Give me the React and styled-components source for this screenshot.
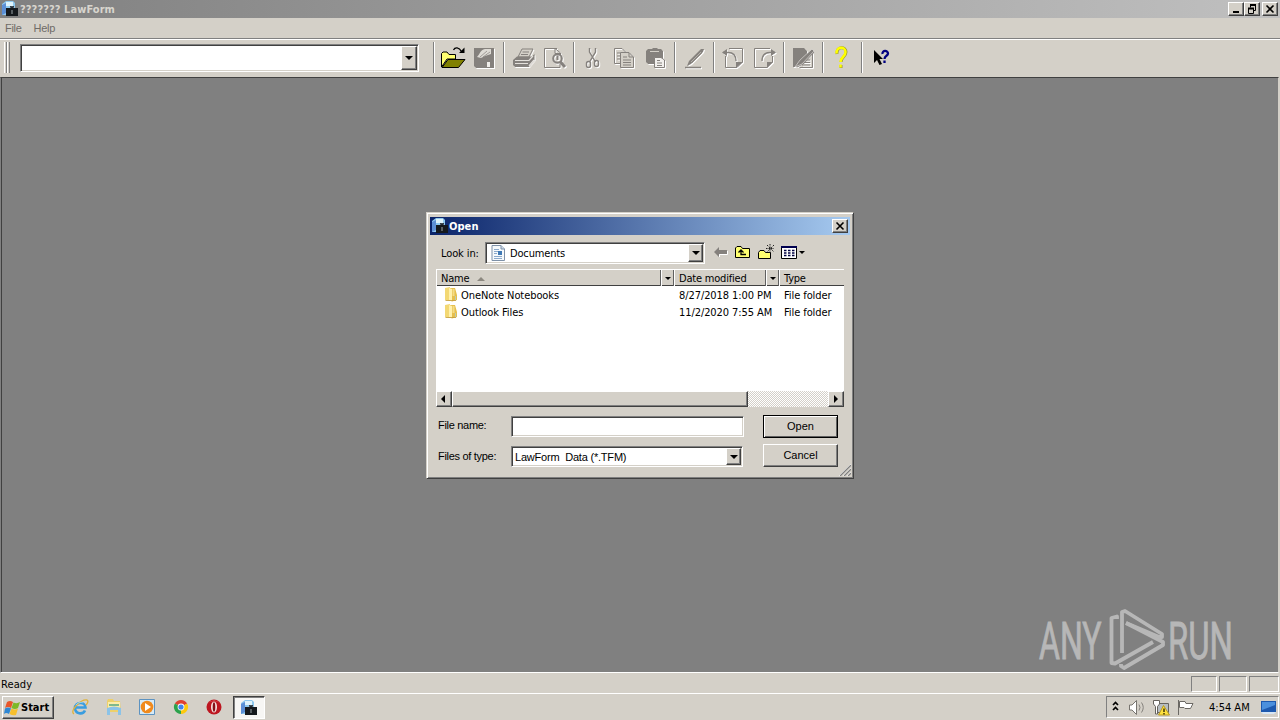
import React from 'react'
import styled, { createGlobalStyle, css } from 'styled-components'


function App() {
  return (
        <Desktop>
            <GlobalStyle />
            <TitleBar>
                <AppIcon size={16} />
                <Caption>??????? LawForm</Caption>
                <CaptionButtons>
                    <CaptionButton><MinimizeIcon /></CaptionButton>
                    <CaptionButton><RestoreIcon /></CaptionButton>
                    <CaptionButton $gap><CloseIcon /></CaptionButton>
                </CaptionButtons>
            </TitleBar>
            <MenuBar>
                <MenuItem>File</MenuItem>
                <MenuItem>Help</MenuItem>
            </MenuBar>
            <Toolbar />
            <Workspace>
                <OpenDialog />
                <Watermark />
            </Workspace>
            <StatusBar>
                <StatusText>Ready</StatusText>
                <Pane $width={26} />
                <Pane $width={28} />
                <Pane $width={30} />
            </StatusBar>
            <Taskbar />
        </Desktop>
  )
}

function Toolbar() {
  return (
        <ToolbarRow>
            <Gripper><i /><i /></Gripper>
            <Combo $width={399} $height={28}>
                <ComboValue />
                <DropButton $width={16}><DownArrow /></DropButton>
            </Combo>
            <ToolGroups>
                <ToolGroup><OpenIcon /><SaveIcon /></ToolGroup>
                <ToolGroup><PrintIcon /><PreviewIcon /></ToolGroup>
                <ToolGroup><CutIcon /><CopyIcon /><PasteIcon /></ToolGroup>
                <ToolGroup><PenIcon /></ToolGroup>
                <ToolGroup><PageTurnIcon /><PageTurnIcon forward /></ToolGroup>
                <ToolGroup><EditPageIcon /></ToolGroup>
                <ToolGroup><HelpIcon /></ToolGroup>
                <ToolGroup><PointerHelpIcon /></ToolGroup>
            </ToolGroups>
        </ToolbarRow>
  )
}

const files = [
  { name: 'OneNote Notebooks', date: '8/27/2018 1:00 PM', type: 'File folder' },
  { name: 'Outlook Files', date: '11/2/2020 7:55 AM', type: 'File folder' },
]

function OpenDialog() {
  return (
        <Dialog>
            <DialogTitle>
                <AppIcon size={16} />
                <Caption $light>Open</Caption>
                <CaptionButtons>
                    <CaptionButton><CloseIcon /></CaptionButton>
                </CaptionButtons>
            </DialogTitle>
            <LookRow>
                <LookLabel>Look in:</LookLabel>
                <Combo $width={220} $height={22}>
                    <ComboValue><DocumentIcon /><span>Documents</span></ComboValue>
                    <DropButton $width={15}><DownArrow /></DropButton>
                </Combo>
                <LookTools><LookIcons /></LookTools>
            </LookRow>
            <FileList>
                <HeaderRow>
                    <HeaderCell>Name<SortArrow /></HeaderCell>
                    <HeaderCell $drop><DownArrow small /></HeaderCell>
                    <HeaderCell>Date modified</HeaderCell>
                    <HeaderCell $drop><DownArrow small /></HeaderCell>
                    <HeaderCell $last>Type</HeaderCell>
                </HeaderRow>
                {files.map((file) => (
                    <FileRow key={file.name}>
                        <FileName><FolderIcon />{file.name}</FileName>
                        <span>{file.date}</span>
                        <span>{file.type}</span>
                    </FileRow>
                ))}
                <Scrollbar>
                    <ScrollButton><SideArrow left /></ScrollButton>
                    <Thumb />
                    <Track />
                    <ScrollButton><SideArrow /></ScrollButton>
                </Scrollbar>
            </FileList>
            <FormGrid>
                <FormLabel>File name:</FormLabel>
                <FileInput />
                <PushButton $default>Open</PushButton>
                <FormLabel $low>Files of type:</FormLabel>
                <TypeCombo $width={232} $height={21}>
                    <TypeValue>LawForm&nbsp; Data (*.TFM)</TypeValue>
                    <DropButton $width={15}><DownArrow /></DropButton>
                </TypeCombo>
                <PushButton>Cancel</PushButton>
            </FormGrid>
            <SizeGrip viewBox="0 0 12 12">
                <path d="M0 12L12 0M4 12L12 4M8 12L12 8" stroke="#fff" />
                <path d="M1 12L12 1M5 12L12 5M9 12L12 9" stroke="#808080" strokeWidth="1.3" />
            </SizeGrip>
        </Dialog>
  )
}

function Taskbar() {
  return (
        <TaskbarRow>
            <StartButton><WindowsIcon />Start</StartButton>
            <QuickLaunch>
                <IeIcon />
                <ExplorerIcon />
                <PlayerIcon />
                <ChromeIcon />
                <OperaIcon />
            </QuickLaunch>
            <ActiveTask><AppIcon size={16} /></ActiveTask>
            <Tray>
                <TrayIcons />
                <Clock>4:54 AM</Clock>
                <MonitorIcon />
            </Tray>
        </TaskbarRow>
  )
}

function Watermark() {
  return (
        <WatermarkSvg viewBox="0 0 206 68">
            <g fill="#b7b7b7" stroke="#b7b7b7" strokeWidth=".9" fontFamily="Roboto, sans-serif" fontSize="52">
                <text transform="translate(5 52.5) scale(.616 1)">ANY</text>
                <text transform="translate(134 52.5) scale(.632 1)">RUN</text>
            </g>
            <g fill="none" stroke="#b7b7b7" strokeWidth="3.800" strokeLinejoin="round">
                <path d="M83 13V10.500L77.500 12V57L81 57.500L119 36" />
                <path d="M88 47V6L91 5L128 28V31L125 31L92 17" />
                <path d="M87 58V60L90 62L129 39V36L92 17" />
            </g>
        </WatermarkSvg>
  )
}

/* ---------- icons ---------- */

function AppIcon({ size }) {
  return (
        <svg width={size} height={size} viewBox="0 0 16 16">
            <path d="M0 3L4 0H11L13 2V7H6V14H0Z" fill="#8fc8ee" />
            <path d="M0 4L4 2V12L0 14Z" fill="#5c8fd6" />
            <path d="M4 1H11V5H4Z" fill="#dff3fb" />
            <path d="M4 7H8V5H12V7H16V15H4Z" fill="#15191d" />
            <path d="M8.500 7V5.800H11.500V7" fill="none" stroke="#52606b" />
            <path d="M9.500 9H10.500V13H9.500Z" fill="#9aa4a8" />
        </svg>
  )
}

const MinimizeIcon = () => (
  <svg width="12" height="10"><path d="M3 8H9" stroke="#000" strokeWidth="2" /></svg>
)

const RestoreIcon = () => (
  <svg width="12" height="10" fill="none" stroke="#000">
    <path d="M4 1H10M2 4.500H8" strokeWidth="2" />
    <path d="M4.500 1V3.500M9.500 1V6.500H8" />
    <path d="M2.500 4V9.500H7.500V4" />
  </svg>
)

const CloseIcon = () => (
  <svg width="12" height="10"><path d="M2.500 1.500L9.500 8.500M9.500 1.500L2.500 8.500" stroke="#000" strokeWidth="1.600" /></svg>
)

const DownArrow = ({ small }) => (
  <svg width="8" height="4" viewBox="0 0 8 4">
    <path d={small ? 'M1 0H7L4 3Z' : 'M0 0H8L4 4Z'} />
  </svg>
)

const SideArrow = ({ left }) => (
  <svg width="8" height="8" viewBox="0 0 8 8"><path d={left ? 'M6 0V8L2 4Z' : 'M3 0V8L7 4Z'} /></svg>
)

const SortArrow = () => (
  <svg width="8" height="4" viewBox="0 0 8 4"><path d="M0 4H8L4 0Z" fill="#8c8880" /></svg>
)

const ToolIcon = ({ children }) => (
  <svg width="31" height="31" viewBox="0 0 31 31" fill="none">{children}</svg>
)

// greyed-out glyph with the light edge one pixel down and right
const Etched = ({ children }) => (
  <ToolIcon>
    <g transform="translate(1 1)" color="#fff">{children}</g>
    <g color="#85817d">{children}</g>
  </ToolIcon>
)

const OpenIcon = () => (
  <ToolIcon>
    <path d="M3.500 25V11.500L5 10H9L11 12.500H17.500V17H9L3.500 25" fill="#ffff70" stroke="#000" />
    <path d="M4 25.500L10 17.500H27L20.500 25.500Z" fill="#808000" stroke="#000" />
    <path d="M15.500 8C17 5 21 5 23.500 9.500" stroke="#000" strokeWidth="1.300" />
    <path d="M26.500 5.500V11H21Z" fill="#000" />
  </ToolIcon>
)

const SaveIcon = () => (
  <Etched>
    <path d="M5 6H25V26H7L5 24Z" fill="currentColor" />
    <path d="M8 15C11 12 11 8 16 7H22V12L16 14L12 16Z" fill="#dedbd5" />
    <path d="M11 15L18 9M14 15L21 10" stroke="#85817d" strokeWidth=".7" />
    <path d="M18 20H21V25H18Z" fill="#f0eeea" />
  </Etched>
)

const PrintIcon = () => (
  <Etched>
    <path d="M10 15L14 7H25L21 15Z" fill="#d4d0c8" stroke="currentColor" />
    <path d="M14.500 10H21M13 12.500H20" stroke="currentColor" />
    <path d="M5 18L9 14.500H24L26.500 12V18L21 25H7L5 23Z" fill="currentColor" />
    <path d="M7 18.500H21L25 14M7 21.500H20M21 24L26 18" stroke="#e4e1dc" strokeWidth="1.200" />
  </Etched>
)

const PreviewIcon = () => (
  <Etched>
    <path d="M18 6.500H5.500V25.500H21V22M16 6.500L21.500 11V14" stroke="currentColor" />
    <path d="M16 7V11.500H21" stroke="currentColor" />
    <circle cx="18.500" cy="16.500" r="4.300" stroke="currentColor" strokeWidth="2" />
    <path d="M21.500 20L26 25" stroke="currentColor" strokeWidth="3" />
    <path d="M18.500 13.500V18" stroke="currentColor" strokeWidth="2" />
  </Etched>
)

const CutIcon = () => (
  <Etched>
    <path d="M11.500 6V10L17.500 20M17.500 6V10L11.500 20" stroke="currentColor" strokeWidth="1.400" />
    <rect x="8.500" y="19.500" width="4" height="6" rx="2" stroke="currentColor" strokeWidth="1.400" />
    <rect x="16.500" y="18.500" width="4" height="6" rx="2" stroke="currentColor" strokeWidth="1.400" />
  </Etched>
)

const CopyIcon = () => (
  <Etched>
    <path d="M5.500 6.500H13L16.500 10V21.500H5.500Z" stroke="currentColor" />
    <path d="M8 11H11M8 14H11M8 17H11" stroke="currentColor" />
    <path d="M11.500 10.500H20L24.500 15V25.500H11.500Z" fill="#d4d0c8" stroke="currentColor" />
    <path d="M20 11V15H24M14 15H18M14 18H22M14 20.500H22M14 23H22" stroke="currentColor" />
  </Etched>
)

const PasteIcon = () => (
  <Etched>
    <path d="M6 9L8 7H12L13 6H17L18 7H21L23 9V22H8L6 20Z" fill="currentColor" />
    <path d="M10 9.500H19" stroke="#d4d0c8" />
    <path d="M14.500 15.500H21L24.500 18V25.500H14.500Z" fill="#f2f0ed" stroke="currentColor" />
    <path d="M17 18.500H20M17 21H22M17 23.500H22" stroke="currentColor" />
  </Etched>
)

const PenIcon = () => (
  <Etched>
    <path d="M8 24L10 19L22 7L25 7L24 10L12 22Z" fill="currentColor" />
    <path d="M12 20L22 10" stroke="#b4b0aa" />
    <path d="M6 25.500H22" stroke="currentColor" strokeWidth="1.500" />
  </Etched>
)

const PageTurnIcon = ({ forward }) => (
  <Etched>
    <g transform={forward ? 'translate(31 0) scale(-1 1)' : undefined}>
      <path d={forward ? 'M10 6.500H25.500V25.500H13L7.500 20V14' : 'M11 6.500H24.500V20L19 25.500H7.500V14'} stroke="currentColor" />
      <path d="M5 10.500H10C15 10.500 18 13 18 19" stroke="currentColor" strokeWidth="1.300" />
      <path d="M9 7V14L4 10.500Z" fill="currentColor" />
    </g>
    <path d={forward ? 'M18 26V20H24Z' : 'M18 26V20H25Z'} fill="currentColor" />
  </Etched>
)

const EditPageIcon = () => (
  <Etched>
    <path d="M5 6H16L19 9V14L10 25H5Z" fill="currentColor" />
    <path d="M11.500 25.500H24.500V11L20 15M15 18H22M15 20.500H22M14 23H22" stroke="currentColor" />
    <path d="M7 25L12 18L24 7L26 9L14 22Z" fill="#85817d" stroke="#eceae6" strokeWidth=".6" />
  </Etched>
)

const HelpIcon = () => (
  <ToolIcon>
    <path d="M10 12C9 4 19 4 19 10C19 15 14 15 14 20M14 23V26" stroke="#9a9838" strokeWidth="3" />
    <path d="M9.500 11.500C9 4 18.500 4 18.500 10C18.500 15 13.500 15 13.500 20M13.500 22.500V25.500" stroke="#ffff00" strokeWidth="2.500" />
  </ToolIcon>
)

const PointerHelpIcon = () => (
  <ToolIcon>
    <path d="M8 8V21L11 18L13.500 23L16 22L13.500 17H17Z" fill="#000" />
    <path d="M16.500 12C16 8 22 8 22 11.500C22 14 18.500 13.500 18.500 17M18.500 18.500V21" stroke="#000080" strokeWidth="2.300" />
  </ToolIcon>
)

const DocumentIcon = () => (
  <svg width="14" height="16" viewBox="0 0 14 16">
    <path d="M1 .5H10L13.500 4V15.500H1Z" fill="#f5f9fc" stroke="#7e91a8" />
    <path d="M10 .5V4H13.500" fill="#cddceb" stroke="#7e91a8" />
    <path d="M3 4.500H8M3 6.500H7M3 8.500H6M3 11.500H11M3 13.500H11" stroke="#8ba9cb" />
    <path d="M7 6H11V10H7Z" fill="#3f79b5" />
  </svg>
)

const FolderIcon = () => (
  <svg width="14" height="15" viewBox="0 0 14 15">
    <path d="M1 1L6 0V14L1 13Z" fill="#f3d873" />
    <path d="M6 1H11L13 8V13L8 14.500L5 13Z" fill="#e6bf4c" />
    <path d="M5 1L8 2V14L5 13Z" fill="#fff0ac" />
    <path d="M9.500 2V9" stroke="#f5dc86" strokeWidth="2" />
    <path d="M11.500 9V13" stroke="#bccbb0" />
    <path d="M1.500 13.500H12" stroke="#c19b3a" strokeWidth=".8" />
  </svg>
)

const LookIcons = () => (
  <svg width="93" height="20" viewBox="0 0 93 20" fill="none">
    <path d="M0 9L5 4V7H13V11H5V14Z" fill="#85817d" />
    <path d="M5.500 14V11.500H13.500V8" stroke="#fff" />
    <path d="M21.500 14.500V5L23 3.500H27L28.500 5.500H35.500V14.500Z" fill="#ffff70" stroke="#000" />
    <path d="M27 7V11.500H32M24.500 9.500L27 7L29.500 9.500" stroke="#000" strokeWidth="1.300" />
    <path d="M44.500 15.500V9.500L46 7.500H50L51.500 9.500H56.500V15.500Z" fill="#ffff70" stroke="#000" />
    <path d="M56 1V10M52 5.500H60M53 2L60 9M60 2L53 9" stroke="#222" strokeDasharray="1.500 1" />
    <path d="M67.500 3.500H82.500V15.500H67.500Z" fill="#fff" stroke="#000" />
    <path d="M67 4H83" stroke="#000050" strokeWidth="2" />
    <path d="M70 7.500H81M70 10H81M70 12.500H81" stroke="#000040" strokeWidth="1.400" strokeDasharray="2.500 1.500" />
    <path d="M85 8H91L88 11Z" fill="#000" />
  </svg>
)

const WindowsIcon = () => (
  <svg width="17" height="16" viewBox="0 0 17 16">
    <path d="M3 2Q6 0 9 2L7 8Q4 6 1 8Z" fill="#e8562a" />
    <path d="M9.500 2.500Q13 4 16 2L14 8Q11 10 7.500 8Z" fill="#7db928" />
    <path d="M1 8.500Q4 6.500 7 8.500L5 14Q2 12 0 14Z" fill="#2f87d3" />
    <path d="M7.500 8.500Q11 10.500 14 8.500L12 15Q9 16 5.500 14Z" fill="#f7bf2c" />
  </svg>
)

const IeIcon = () => (
  <svg width="18" height="18" viewBox="0 0 18 18" fill="none">
    <path d="M14 12.500C12 17 4 16 4 10C4 4 14 3 14.500 9.500H5" stroke="#3a9ddf" strokeWidth="2.600" />
    <path d="M3 16C-2 13 10 1 16 2C18 3 16 6 15 7" stroke="#e0b23a" strokeWidth="1.300" />
    <path d="M5 7C7 4 11 4 12 5" stroke="#8fd5f7" />
  </svg>
)

const ExplorerIcon = () => (
  <svg width="18" height="18" viewBox="0 0 18 18">
    <path d="M2 3L3 1H8L9 3H15L16 14H2Z" fill="#edd06b" />
    <path d="M3 4H15V10H3Z" fill="#fbedaa" />
    <path d="M4 6H14V8H4Z" fill="#7fb98b" />
    <path d="M2 10Q9 7 16 10V17H13V12H5V17H2Z" fill="#8bc3e8" />
  </svg>
)

const PlayerIcon = () => (
  <svg width="18" height="18" viewBox="0 0 18 18">
    <path d="M1.500 1.500H16.500V16.500H1.500Z" fill="#d6eaf7" stroke="#5d93c1" />
    <circle cx="9" cy="9" r="6.300" fill="#f08a1d" />
    <path d="M7 5L13 9L7 13Z" fill="#fff" />
  </svg>
)

const ChromeIcon = () => (
  <svg width="18" height="18" viewBox="0 0 18 18">
    <path d="M9 9L2.900 5.500A7 7 0 0 1 15.100 5.500Z" fill="#df4031" />
    <path d="M9 9L15.100 5.500A7 7 0 0 1 9 16Z" fill="#fdc90d" />
    <path d="M9 9V16A7 7 0 0 1 2.900 5.500Z" fill="#2ca24c" />
    <circle cx="9" cy="9" r="3.400" fill="#fff" />
    <circle cx="9" cy="9" r="2.600" fill="#4184ed" />
  </svg>
)

const OperaIcon = () => (
  <svg width="18" height="18" viewBox="0 0 18 18">
    <circle cx="9" cy="9" r="7.500" fill="#bd1620" />
    <path d="M3 5Q9 0 15 5Q12 3 9 3Q6 3 3 5Z" fill="#ef7a79" />
    <ellipse cx="9" cy="9" rx="3" ry="5.600" fill="#f7e5e3" />
    <ellipse cx="9" cy="9" rx="1.300" ry="4.800" fill="#851017" />
  </svg>
)

const TrayIcons = () => (
  <svg width="86" height="18" viewBox="0 0 86 18" fill="none">
    <path d="M2 7L4.500 4.500L7 7M2 12L4.500 9.500L7 12" stroke="#000" strokeWidth="1.700" />
    <path d="M18.500 7H21L25.500 2.500V16.500L21 12H18.500Z" fill="#fff" stroke="#77746f" />
    <path d="M28 6.500Q30 9.500 28 12.500M30.500 4.500Q34 9.500 30.500 14.500" stroke="#85827d" />
    <path d="M46.500 5.500H57.500V14.500H46.500Z" fill="#b7bdc1" stroke="#66635e" />
    <path d="M42.500 2.500H48.500V6L46.500 8.500V16H44.500V8.500L42.500 6Z" fill="#fff" stroke="#66635e" />
    <path d="M52.500 7.500L58.500 17H47.500Z" fill="#ffe13e" stroke="#b99a20" />
    <path d="M53 10.500V14M53 15V16.500" stroke="#332800" strokeWidth="1.400" />
    <path d="M67.500 2V17" stroke="#6b6864" />
    <path d="M68.500 3.500H74L75 5.500H82L79.500 10.500H74L73 9.500H68.500Z" fill="#fff" stroke="#6b6864" />
  </svg>
)

const MonitorIcon = () => (
  <svg width="17" height="16" viewBox="0 0 17 16">
    <path d="M1 2H16V13H1Z" fill="#1d59ae" />
    <path d="M2 3H15V6L2 11Z" fill="#4b90dd" />
    <path d="M1 13H16L14 15H3Z" fill="#d7e6f4" />
  </svg>
)

/* ---------- styles ---------- */

const GlobalStyle = createGlobalStyle`
    *, *::before, *::after {
        box-sizing: border-box;
    }

    body {
        margin: 0;
        overflow: hidden;
        font-family: 'DejaVu Sans Condensed', 'DejaVu Sans', sans-serif;
        font-size: 11px;
        line-height: 14px;
        color: #000;
    }

    svg {
        display: block;
        flex: none;
    }
`

const raised = css`
    background: #d4d0c8;
    border: 1px solid;
    border-color: #fff #404040 #404040 #fff;
    box-shadow: inset -1px -1px #808080;
`

const sunken = css`
    border: 1px solid;
    border-color: #808080 #fff #fff #808080;
    box-shadow: inset 1px 1px #404040, inset -1px -1px #d4d0c8;
`

const Desktop = styled.div`
    width: 1280px;
    height: 720px;
    display: flex;
    flex-direction: column;
    background: #d4d0c8;
    white-space: nowrap;
`

const TitleBar = styled.div`
    height: 18px;
    display: flex;
    align-items: center;
    padding: 0 2px;
    background: linear-gradient(90deg, #808080, #c0c0c0);
`

const Caption = styled.div`
    margin-left: ${props => props.$light ? '1px' : '2px'};
    padding-top: 2px;
    font-weight: bold;
    letter-spacing: 0.06px;
    color: ${props => props.$light ? '#fff' : '#d8d5ce'};
`

const CaptionButtons = styled.div`
    display: flex;
    margin-left: auto;
`

const CaptionButton = styled.div`
    ${raised}
    width: 16px;
    height: 14px;
    padding: 1px;
    margin-left: ${props => props.$gap ? '2px' : '0'};
`

const MenuBar = styled.div`
    height: 22px;
    display: flex;
    padding: 3px 5px;
    gap: 12px;
    border-bottom: 1px solid #fff;
    box-shadow: inset 0 -1px #808080;
`

const MenuItem = styled.span`
    font-family: 'Liberation Sans', sans-serif;
    letter-spacing: -0.3px;
    color: #6f6b67;
`

const ToolbarRow = styled.div`
    height: 37px;
    display: flex;
    align-items: flex-start;
    padding: 2px 4px 0;
`

const Gripper = styled.div`
    display: flex;
    margin-right: 11px;

    i {
        width: 3px;
        height: 31px;
        background: #d4d0c8;
        border-left: 1px solid #fff;
        border-right: 1px solid #808080;
    }
`

const Combo = styled.div`
    ${sunken}
    width: ${props => props.$width}px;
    height: ${props => props.$height}px;
    display: flex;
    padding: 1px;
    background: #fff;
    ${ToolbarRow} > & {
        margin: 2px 14px 0 -1px;
    }
`

const TypeCombo = styled(Combo)`
    margin-top: 2px;
`

const ComboValue = styled.div`
    flex: 1;
    display: flex;
    align-items: center;
    gap: 5px;
    padding-left: 4px;
    letter-spacing: -0.15px;

    span {
        padding-top: 1px;
    }
`

const TypeValue = styled(ComboValue)`
    padding-left: 2px;
    font-family: 'Liberation Sans', sans-serif;
    letter-spacing: -0.2px;
`

const DropButton = styled.div`
    ${raised}
    width: ${props => props.$width}px;
    display: flex;
    align-items: center;
    justify-content: center;
`

const ToolGroups = styled.div`
    display: flex;
`

const ToolGroup = styled.div`
    display: flex;
    padding: 0 3px 0 4px;
    border-left: 1px solid #808080;
    box-shadow: inset 1px 0 #fff;
`

const Workspace = styled.div`
    position: relative;
    flex: 1;
    margin-right: 1px;
    background: #808080;
    border: 1px solid;
    border-color: #404040 #d4d0c8 #fff #808080;
    box-shadow: inset 1px 0 #404040;
`

const Dialog = styled.div`
    position: absolute;
    left: 425px;
    top: 134px;
    width: 428px;
    height: 267px;
    padding: 3px;
    background: #d4d0c8;
    border: 1px solid;
    border-color: #d4d0c8 #404040 #404040 #d4d0c8;
    box-shadow: inset 1px 1px #fff, inset -1px -1px #808080;
`

const DialogTitle = styled.div`
    height: 18px;
    display: flex;
    align-items: center;
    margin-top: 1px;
    padding: 0 2px;
    background: linear-gradient(90deg, #0a246a, #a6caf0);
`

const LookRow = styled.div`
    display: flex;
    align-items: center;
    height: 22px;
    margin: 7px 0 5px 11px;
`

const LookLabel = styled.span`
    width: 44px;
    padding-top: 1px;
    letter-spacing: -0.1px;
`

const LookTools = styled.div`
    margin-left: 9px;
`

const FileList = styled.div`
    display: flex;
    flex-direction: column;
    width: 408px;
    height: 138px;
    margin-left: 6px;
    background: #fff;
`

const HeaderRow = styled.div`
    display: grid;
    grid-template-columns: 225px 13px 92px 13px 65px;
    height: 17px;
    background: #d4d0c8;
    border-top: 1px solid #fff;
    border-bottom: 1px solid #404040;
`

const HeaderCell = styled.div`
    display: flex;
    align-items: center;
    gap: 8px;
    padding-left: ${props => props.$drop ? '2px' : '4px'};
    padding-top: 2px;
    letter-spacing: -0.2px;
    border-left: 1px solid #fff;
    border-right: ${props => props.$last ? 'none' : '1px solid #606060'};
`

const FileRow = styled.div`
    display: grid;
    grid-template-columns: 235px 105px 60px;
    align-items: center;
    height: 17px;
    padding-left: 8px;
    padding-top: 2px;
    letter-spacing: -0.08px;
`

const FileName = styled.span`
    display: flex;
    align-items: center;
    gap: 3px;

    svg {
        margin-top: -2px;
    }
`

const Scrollbar = styled.div`
    display: flex;
    height: 16px;
    margin-top: auto;
`

const ScrollButton = styled.div`
    ${raised}
    width: 16px;
    padding: 3px 2px;
`

const Thumb = styled.div`
    ${raised}
    width: 296px;
`

const Track = styled.div`
    flex: 1;
    background: repeating-conic-gradient(#fff 0 25%, #d4d0c8 0 50%) 0 0 / 2px 2px;
`

const FormGrid = styled.div`
    display: grid;
    grid-template-columns: 73px 252px 75px;
    grid-template-rows: 23px 23px;
    row-gap: 6px;
    align-items: center;
    margin: 8px 0 0 8px;
    font-family: 'Liberation Sans', sans-serif;
`

const FormLabel = styled.label`
    padding-top: ${props => props.$low ? '1px' : '0'};
    padding-bottom: ${props => props.$low ? '0' : '3px'};
    letter-spacing: -0.3px;
`

const FileInput = styled.div`
    ${sunken}
    width: 233px;
    height: 21px;
    background: #fff;
`

const PushButton = styled.button`
    ${raised}
    height: 23px;
    padding: 0 0 2px;
    font: inherit;
    color: #000;
    ${props => props.$default && css`
        border-color: #000;
        box-shadow: inset 1px 1px #fff, inset -1px -1px #606060;
    `}
`

const SizeGrip = styled.svg`
    position: absolute;
    right: 2px;
    bottom: 2px;
    width: 12px;
    height: 12px;
`

const WatermarkSvg = styled.svg`
    position: absolute;
    left: 1033px;
    top: 528px;
    width: 206px;
    height: 68px;
`

const StatusBar = styled.div`
    height: 20px;
    display: flex;
    align-items: flex-start;
    gap: 2px;
    padding: 3px 1px 0 1px;
`

const StatusText = styled.span`
    flex: 1;
    padding-top: 2px;
    letter-spacing: 0.1px;
`

const Pane = styled.div`
    width: ${props => props.$width}px;
    height: 16px;
    border: 1px solid;
    border-color: #808080 #fff #fff #808080;
`

const TaskbarRow = styled.div`
    height: 27px;
    display: flex;
    align-items: flex-start;
    padding: 2px 1px 0 2px;
    border-top: 1px solid #fff;
`

const StartButton = styled.div`
    ${raised}
    width: 52px;
    height: 23px;
    display: flex;
    align-items: center;
    padding-left: 1px;
    font-weight: bold;
`

const QuickLaunch = styled.div`
    display: flex;
    gap: 15.5px;
    padding: 2px 0 0 17px;
`

const ActiveTask = styled.div`
    width: 32px;
    height: 23px;
    margin-left: 10px;
    padding: 3px 7px;
    background: #f7f6f4;
    border: 1px solid;
    border-color: #404040 #fff #fff #404040;
    box-shadow: inset 1px 1px #808080;
`

const Tray = styled.div`
    display: flex;
    align-items: center;
    width: 173px;
    height: 22px;
    margin-left: auto;
    padding-left: 4px;
    border: 1px solid;
    border-color: #808080 #fff #fff #808080;
`

const Clock = styled.span`
    width: 51px;
    margin-left: 12px;
    padding-top: 1px;
`


export default App
